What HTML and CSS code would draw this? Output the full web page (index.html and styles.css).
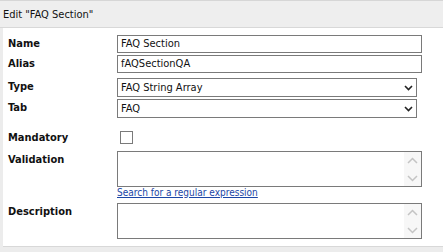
FILE: index.html
```html
<!DOCTYPE html>
<html>
<head>
<meta charset="utf-8">
<link rel="stylesheet" href="styles.css">
</head>
<body>
<div class="panel">
  <div class="header">Edit "FAQ Section"</div>
  <div class="form">
    <div class="row r-name">
      <div class="label">Name</div>
      <div class="field"><div class="input">FAQ Section</div></div>
    </div>
    <div class="row r-alias">
      <div class="label">Alias</div>
      <div class="field"><div class="input">fAQSectionQA</div></div>
    </div>
    <div class="row r-type">
      <div class="label">Type</div>
      <div class="field"><div class="select"><span>FAQ String Array</span>
        <svg class="chev" width="9" height="6" viewBox="0 0 9 6"><path d="M1 1 L4.5 4.5 L8 1" fill="none" stroke="#222" stroke-width="1.6"/></svg></div></div>
    </div>
    <div class="row r-tab">
      <div class="label">Tab</div>
      <div class="field"><div class="select"><span>FAQ</span>
        <svg class="chev" width="9" height="6" viewBox="0 0 9 6"><path d="M1 1 L4.5 4.5 L8 1" fill="none" stroke="#222" stroke-width="1.6"/></svg></div></div>
    </div>
    <div class="row r-mand">
      <div class="label">Mandatory</div>
      <div class="field"><div class="check"></div></div>
    </div>
    <div class="row r-valid">
      <div class="label">Validation</div>
      <div class="field">
        <div class="textarea"><div class="ta-body"></div><div class="scroll">
          <svg width="11" height="7" viewBox="0 0 11 7"><path d="M1 6 L5.5 1.5 L10 6" fill="none" stroke="#c4c4c4" stroke-width="1.5"/></svg>
          <svg width="11" height="7" viewBox="0 0 11 7"><path d="M1 1 L5.5 5.5 L10 1" fill="none" stroke="#c4c4c4" stroke-width="1.5"/></svg>
        </div></div>
        <a class="link" href="#">Search for a regular expression</a>
      </div>
    </div>
    <div class="row r-desc">
      <div class="label">Description</div>
      <div class="field">
        <div class="textarea"><div class="ta-body"></div><div class="scroll">
          <svg width="11" height="7" viewBox="0 0 11 7"><path d="M1 6 L5.5 1.5 L10 6" fill="none" stroke="#c4c4c4" stroke-width="1.5"/></svg>
          <svg width="11" height="7" viewBox="0 0 11 7"><path d="M1 1 L5.5 5.5 L10 1" fill="none" stroke="#c4c4c4" stroke-width="1.5"/></svg>
        </div></div>
      </div>
    </div>
  </div>
</div>
</body>
</html>
```

FILE: styles.css
```css
html, body {
  margin: 0;
  padding: 0;
}
body {
  width: 443px;
  height: 252px;
  overflow: hidden;
  background: #ececec;
  font-family: "DejaVu Sans Condensed", "DejaVu Sans", Verdana, sans-serif;
  font-stretch: condensed;
  font-size: 11px;
  color: #111;
}
.panel {
  border-top: 1px solid #d6d6d6;
}
.header {
  height: 26px;
  line-height: 27px;
  padding-left: 3px;
  background: #eeeeee;
  border-bottom: 1px solid #d8d8d8;
  color: #111;
}
.form {
  box-sizing: border-box;
  height: 219px;
  margin-left: 3px;
  background: #ffffff;
  padding: 7px 0 0 5px;
  border-bottom: 1px solid #d8d8d8;
}
.row {
  display: grid;
  grid-template-columns: 109px 305px;
}
.label {
  font-weight: bold;
  line-height: 17px;
  color: #111;
}
.r-alias { margin-top: 2px; }
.r-type { margin-top: 5px; }
.r-tab { margin-top: 2px; }
.r-mand { margin-top: 12px; }
.r-mand .label { line-height: 15px; }
.r-valid { margin-top: 6px; }
.r-desc { margin-top: 4px; }

.input {
  height: 16px;
  line-height: 16px;
  border: 1px solid #7a7a7a;
  padding-left: 3px;
  width: 300px;
  background: #fff;
}
.select {
  height: 17px;
  line-height: 17px;
  border: 1px solid #7a7a7a;
  padding-left: 3px;
  width: 295px;
  display: flex;
  justify-content: space-between;
  align-items: center;
  background: #fff;
}
.chev {
  margin-right: 3px;
}
.check {
  width: 11px;
  height: 11px;
  border: 1px solid #7a7a7a;
  margin-left: 3px;
  margin-top: 1px;
  background: #fff;
}
.textarea {
  width: 303px;
  height: 34px;
  border: 1px solid #7a7a7a;
  display: flex;
  background: #fff;
}
.ta-body {
  flex: 1;
}
.scroll {
  width: 17px;
  background: #f7f7f7;
  display: flex;
  flex-direction: column;
  align-items: center;
  justify-content: space-between;
  padding: 5px 0 4px;
}
.link {
  display: block;
  color: #1b46a6;
  text-decoration: underline;
  font-size: 10px;
  line-height: 12px;
  height: 12px;
}
.r-valid .label, .r-desc .label {
  line-height: 17px;
}
```
